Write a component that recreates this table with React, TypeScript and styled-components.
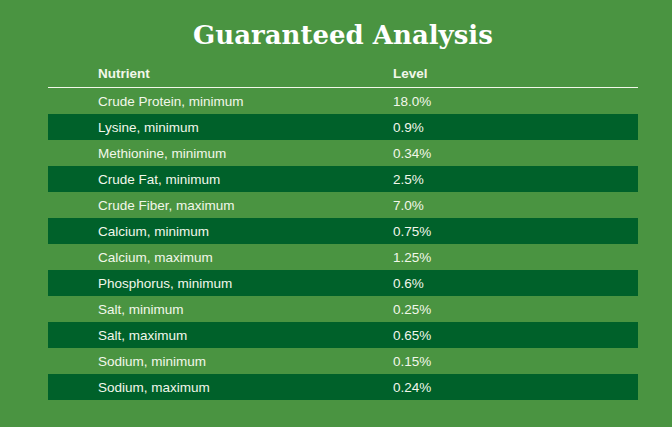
import React from "react";
import styled, { createGlobalStyle } from "styled-components";

const Global = createGlobalStyle`
  html, body { margin: 0; padding: 0; background: #4a9441; }
  body { font-family: "Liberation Sans", Arial, sans-serif; }
`;

const Page = styled.div`
  width: 672px;
  height: 427px;
  box-sizing: border-box;
  padding: 14px 34px 0 48px;
  background: #4a9441;
  color: #f2f7ea;
`;

const Title = styled.h1`
  margin: 0;
  text-align: center;
  font-family: "DejaVu Serif", "Liberation Serif", serif;
  font-weight: 700;
  font-size: 26px;
  line-height: 42px;
  color: #ffffff;
`;

const Table = styled.table`
  width: 100%;
  border-collapse: collapse;
  margin-top: 4px;
`;

const HeadCell = styled.th<{ $indent: number }>`
  text-align: left;
  font-size: 13.5px;
  font-weight: 700;
  height: 27px;
  padding: 0 0 0 ${(p) => p.$indent}px;
  border-bottom: 1px solid #f2f7ea;
  vertical-align: middle;
`;

const Row = styled.tr<{ $dark: boolean }>`
  background: ${(p) => (p.$dark ? "#00612a" : "transparent")};
`;

const Cell = styled.td<{ $indent: number }>`
  height: 26px;
  padding: 0 0 0 ${(p) => p.$indent}px;
  font-size: 13.5px;
  vertical-align: middle;
`;

const rows: [string, string][] = [
  ["Crude Protein, minimum", "18.0%"],
  ["Lysine, minimum", "0.9%"],
  ["Methionine, minimum", "0.34%"],
  ["Crude Fat, minimum", "2.5%"],
  ["Crude Fiber, maximum", "7.0%"],
  ["Calcium, minimum", "0.75%"],
  ["Calcium, maximum", "1.25%"],
  ["Phosphorus, minimum", "0.6%"],
  ["Salt, minimum", "0.25%"],
  ["Salt, maximum", "0.65%"],
  ["Sodium, minimum", "0.15%"],
  ["Sodium, maximum", "0.24%"],
];

export default function App() {
  return (
    <>
      <Global />
      <Page>
        <Title>Guaranteed Analysis</Title>
        <Table>
          <colgroup>
            <col style={{ width: 295 }} />
            <col />
          </colgroup>
          <thead>
            <tr>
              <HeadCell $indent={50}>Nutrient</HeadCell>
              <HeadCell $indent={50}>Level</HeadCell>
            </tr>
          </thead>
          <tbody>
            {rows.map(([n, v], i) => (
              <Row key={n} $dark={i % 2 === 1}>
                <Cell $indent={50}>{n}</Cell>
                <Cell $indent={50}>{v}</Cell>
              </Row>
            ))}
          </tbody>
        </Table>
      </Page>
    </>
  );
}
